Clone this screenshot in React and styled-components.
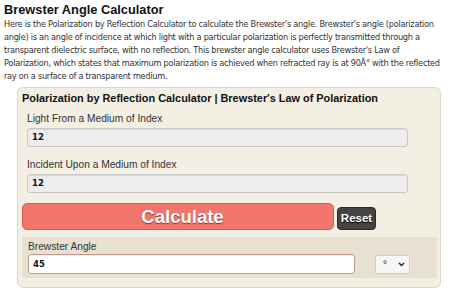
import React from 'react';
import styled, { createGlobalStyle } from 'styled-components';

const Global = createGlobalStyle`
  body {
    margin: 0;
    background: #fff;
    font-family: "Liberation Sans", Arial, sans-serif;
  }
`;

const Page = styled.div`
  padding: 2px 0 0 4px;
  width: 450px;
  box-sizing: border-box;
  overflow: hidden;
`;

const Title = styled.h1`
  margin: 0;
  font-size: 12.8px;
  line-height: 16px;
  font-weight: bold;
  color: #111;
`;

const Intro = styled.p`
  margin: 0;
  font-family: "DejaVu Sans", Verdana, sans-serif;
  font-size: 8.2px;
  letter-spacing: -0.26px;
  line-height: 13px;
  color: #333;
`;

const IntroLine = styled.span`
  display: block;
  white-space: nowrap;
`;

const Panel = styled.div`
  margin: 4px 0 0 13px;
  width: 424px;
  box-sizing: border-box;
  background: #f3efe3;
  border: 1px solid #ddd7c6;
  border-radius: 6px;
  padding: 2px 3px 9px 3px;
`;

const PanelTitle = styled.div`
  font-size: 10.9px;
  font-weight: bold;
  line-height: 16px;
  color: #111;
  padding-left: 1px;
`;

const Field = styled.div`
  padding: 6px 0 0 6px;
  & + & {
    padding-top: 11px;
  }
`;

const Label = styled.div`
  font-size: 10.2px;
  line-height: 13px;
  color: #333;
  margin-bottom: ${(p) => (p.tight ? 1 : 3)}px;
`;

const TextInput = styled.div`
  width: ${(p) => (p.result ? 327 : 381)}px;
  height: ${(p) => (p.result ? 20 : 19)}px;
  box-sizing: border-box;
  border: 1px solid ${(p) => (p.result ? '#c9948c' : '#c8c8c8')};
  border-radius: 3px;
  background: ${(p) =>
    p.result
      ? '#fff'
      : 'repeating-conic-gradient(#f1f1f1 0% 25%, #e9e9e9 0% 50%) 0 0 / 2px 2px'};
  font-family: "DejaVu Sans", Verdana, sans-serif;
  font-size: 8.5px;
  font-weight: bold;
  line-height: ${(p) => (p.result ? 18 : 17)}px;
  padding-left: 4px;
  color: #111;
  box-shadow: inset 0 1px 1px rgba(0, 0, 0, 0.08);
`;

const Buttons = styled.div`
  display: flex;
  align-items: center;
  gap: 3px;
  margin: 10px 0 0 1px;
`;

const CalcButton = styled.div`
  width: 312px;
  height: 27px;
  box-sizing: border-box;
  padding-left: 9px;
  background: #f2766b;
  border: 1px solid #d75c52;
  border-radius: 5px;
  color: #fff;
  font-size: 18.5px;
  font-weight: bold;
  text-align: center;
  line-height: 25px;
  text-shadow: 0 1px 1px rgba(0, 0, 0, 0.5);
`;

const ResetButton = styled.div`
  width: 39px;
  height: 23px;
  box-sizing: border-box;
  background: #434343;
  border: 1px solid #2a2a2a;
  border-radius: 4px;
  color: #fff;
  font-size: 11.5px;
  font-weight: bold;
  line-height: 21px;
  text-align: center;
  text-shadow: 0 1px 1px #000;
  margin-top: 3px;
`;

const ResultBox = styled.div`
  margin-top: 7px;
  margin-left: 1px;
  background: #e7e1d1;
  padding: 3px 0 4px 6px;
`;

const ResultRow = styled.div`
  display: flex;
  align-items: center;
  gap: 20px;
`;

const UnitSelect = styled.div`
  width: 35px;
  height: 19px;
  box-sizing: border-box;
  border: 1px solid #d0d0d0;
  border-radius: 2px;
  background: repeating-conic-gradient(#fafafa 0% 25%, #f2f2f2 0% 50%) 0 0 / 2px 2px;
  display: flex;
  align-items: center;
  justify-content: space-between;
  padding: 0 4px 0 7px;
  font-size: 10px;
  color: #222;
`;

const introLines = [
  "Here is the Polarization by Reflection Calculator to calculate the Brewster's angle. Brewster's angle (polarization",
  'angle) is an angle of incidence at which light with a particular polarization is perfectly transmitted through a',
  "transparent dielectric surface, with no reflection. This brewster angle calculator uses Brewster's Law of",
  'Polarization, which states that maximum polarization is achieved when refracted ray is at 90Â° with the reflected',
  'ray on a surface of a transparent medium.',
];

export default function App() {
  return (
    <Page>
      <Global />
      <Title>Brewster Angle Calculator</Title>
      <Intro>
        {introLines.map((line) => (
          <IntroLine key={line}>{line}</IntroLine>
        ))}
      </Intro>
      <Panel>
        <PanelTitle>Polarization by Reflection Calculator | Brewster's Law of Polarization</PanelTitle>
        <Field>
          <Label>Light From a Medium of Index</Label>
          <TextInput>12</TextInput>
        </Field>
        <Field>
          <Label>Incident Upon a Medium of Index</Label>
          <TextInput>12</TextInput>
        </Field>
        <Buttons>
          <CalcButton>Calculate</CalcButton>
          <ResetButton>Reset</ResetButton>
        </Buttons>
        <ResultBox>
          <Label tight>Brewster Angle</Label>
          <ResultRow>
            <TextInput result>45</TextInput>
            <UnitSelect>
              <span>°</span>
              <svg width="7" height="5" viewBox="0 0 7 5">
                <path d="M1 1 L3.5 3.5 L6 1" fill="none" stroke="#222" strokeWidth="1.4" />
              </svg>
            </UnitSelect>
          </ResultRow>
        </ResultBox>
      </Panel>
    </Page>
  );
}
